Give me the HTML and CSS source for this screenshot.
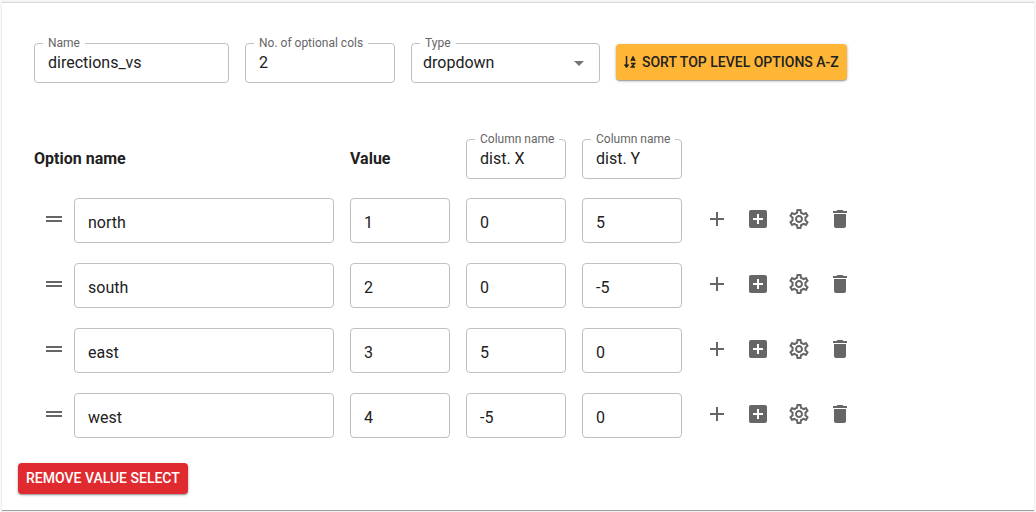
FILE: index.html
```
<!DOCTYPE html>
<html lang="en">
<head>
<meta charset="utf-8">
<title>Value select editor</title>
<link rel="stylesheet" href="styles.css">
</head>
<body>
<svg class="sprite" aria-hidden="true">
  <symbol id="drag" viewBox="0 0 24 24"><path d="M20 9H4v2h16V9zM4 15h16v-2H4v2z"/></symbol>
  <symbol id="add" viewBox="0 0 24 24"><path d="M19 13h-6v6h-2v-6H5v-2h6V5h2v6h6v2z"/></symbol>
  <symbol id="add-box" viewBox="0 0 24 24"><path d="M19 3H5c-1.11 0-2 .9-2 2v14c0 1.1.89 2 2 2h14c1.1 0 2-.9 2-2V5c0-1.1-.9-2-2-2zm-2 10h-4v4h-2v-4H7v-2h4V7h2v4h4v2z"/></symbol>
  <symbol id="gear" viewBox="0 0 24 24"><path d="M19.43 12.98c.04-.32.07-.64.07-.98 0-.34-.03-.66-.07-.98l2.11-1.65c.19-.15.24-.42.12-.64l-2-3.46c-.09-.16-.26-.25-.44-.25-.06 0-.12.01-.17.03l-2.49 1c-.52-.4-1.08-.73-1.69-.98l-.38-2.65C14.46 2.18 14.25 2 14 2h-4c-.25 0-.46.18-.49.42l-.38 2.65c-.61.25-1.17.59-1.69.98l-2.49-1c-.06-.02-.12-.03-.18-.03-.17 0-.34.09-.43.25l-2 3.46c-.13.22-.07.49.12.64l2.11 1.65c-.04.32-.07.65-.07.98 0 .33.03.66.07.98l-2.11 1.65c-.19.15-.24.42-.12.64l2 3.46c.09.16.26.25.44.25.06 0 .12-.01.17-.03l2.49-1c.52.4 1.08.73 1.69.98l.38 2.65c.03.24.24.42.49.42h4c.25 0 .46-.18.49-.42l.38-2.65c.61-.25 1.17-.59 1.69-.98l2.49 1c.06.02.12.03.18.03.17 0 .34-.09.43-.25l2-3.46c.12-.22.07-.49-.12-.64l-2.11-1.65zm-1.98-1.71c.04.31.05.52.05.73 0 .21-.02.43-.05.73l-.14 1.13.89.7 1.08.84-.7 1.21-1.27-.51-1.04-.42-.9.68c-.43.32-.84.56-1.25.73l-1.06.43-.16 1.13-.2 1.35h-1.4l-.19-1.35-.16-1.13-1.06-.43c-.43-.18-.83-.41-1.23-.71l-.91-.7-1.06.43-1.27.51-.7-1.21 1.08-.84.89-.7-.14-1.13c-.03-.31-.05-.54-.05-.74s.02-.43.05-.73l.14-1.13-.89-.7-1.08-.84.7-1.21 1.27.51 1.04.42.9-.68c.43-.32.84-.56 1.25-.73l1.06-.43.16-1.13.2-1.35h1.39l.19 1.35.16 1.13 1.06.43c.43.18.83.41 1.23.71l.91.7 1.06-.43 1.27-.51.7 1.21-1.07.85-.89.7.14 1.13zM12 8c-2.21 0-4 1.79-4 4s1.79 4 4 4 4-1.79 4-4-1.79-4-4-4zm0 6c-1.1 0-2-.9-2-2s.9-2 2-2 2 .9 2 2-.9 2-2 2z"/></symbol>
  <symbol id="trash" viewBox="0 0 24 24"><path d="M6 19c0 1.1.9 2 2 2h8c1.1 0 2-.9 2-2V7H6v12zM19 4h-3.500l-1-1h-5l-1 1H5v2h14V4z"/></symbol>
</svg>

<main class="card">
  <div class="settings">
    <div class="field field-name">
      <input class="input" id="name" type="text" value="directions_vs">
      <label class="label" for="name">Name</label>
    </div>
    <div class="field field-cols">
      <input class="input" id="cols" type="text" value="2">
      <label class="label" for="cols">No. of optional cols</label>
    </div>
    <div class="field field-type">
      <select class="input select" id="type"><option>dropdown</option></select>
      <label class="label" for="type">Type</label>
      <svg class="caret" viewBox="0 0 24 24" aria-hidden="true"><path d="M7 10l5 5 5-5z"/></svg>
    </div>
    <button class="button button-sort" type="button">
      <svg class="sort-icon" viewBox="0 0 12 12" aria-hidden="true">
        <path d="M2.500 0v10.500M0.500 8.500l2 2.500 2-2.500"/>
        <path d="M7 5l2-4 2 4M8 4h2M7 7.500h3.500L7.500 11H11"/>
      </svg>
      Sort top level options A-Z
    </button>
  </div>

  <div class="options">
    <div class="row row-head">
      <div class="heading">Option name</div>
      <div class="heading">Value</div>
      <div class="field">
        <input class="input" id="col-x" type="text" value="dist. X">
        <label class="label" for="col-x">Column name</label>
      </div>
      <div class="field">
        <input class="input" id="col-y" type="text" value="dist. Y">
        <label class="label" for="col-y">Column name</label>
      </div>
    </div>

    <div class="row">
      <div class="option">
        <button class="icon-button" type="button" aria-label="Move north"><svg class="icon"><use href="#drag"/></svg></button>
        <input class="input cell" type="text" aria-label="Option name" value="north">
      </div>
      <input class="input cell" type="text" aria-label="Value" value="1">
      <input class="input cell" type="text" aria-label="dist. X" value="0">
      <input class="input cell" type="text" aria-label="dist. Y" value="5">
      <div class="actions">
        <button class="icon-button" type="button" aria-label="Add option"><svg class="icon"><use href="#add"/></svg></button>
        <button class="icon-button" type="button" aria-label="Add child option"><svg class="icon"><use href="#add-box"/></svg></button>
        <button class="icon-button" type="button" aria-label="Settings"><svg class="icon"><use href="#gear"/></svg></button>
        <button class="icon-button" type="button" aria-label="Delete"><svg class="icon"><use href="#trash"/></svg></button>
      </div>
    </div>

    <div class="row">
      <div class="option">
        <button class="icon-button" type="button" aria-label="Move south"><svg class="icon"><use href="#drag"/></svg></button>
        <input class="input cell" type="text" aria-label="Option name" value="south">
      </div>
      <input class="input cell" type="text" aria-label="Value" value="2">
      <input class="input cell" type="text" aria-label="dist. X" value="0">
      <input class="input cell" type="text" aria-label="dist. Y" value="-5">
      <div class="actions">
        <button class="icon-button" type="button" aria-label="Add option"><svg class="icon"><use href="#add"/></svg></button>
        <button class="icon-button" type="button" aria-label="Add child option"><svg class="icon"><use href="#add-box"/></svg></button>
        <button class="icon-button" type="button" aria-label="Settings"><svg class="icon"><use href="#gear"/></svg></button>
        <button class="icon-button" type="button" aria-label="Delete"><svg class="icon"><use href="#trash"/></svg></button>
      </div>
    </div>

    <div class="row">
      <div class="option">
        <button class="icon-button" type="button" aria-label="Move east"><svg class="icon"><use href="#drag"/></svg></button>
        <input class="input cell" type="text" aria-label="Option name" value="east">
      </div>
      <input class="input cell" type="text" aria-label="Value" value="3">
      <input class="input cell" type="text" aria-label="dist. X" value="5">
      <input class="input cell" type="text" aria-label="dist. Y" value="0">
      <div class="actions">
        <button class="icon-button" type="button" aria-label="Add option"><svg class="icon"><use href="#add"/></svg></button>
        <button class="icon-button" type="button" aria-label="Add child option"><svg class="icon"><use href="#add-box"/></svg></button>
        <button class="icon-button" type="button" aria-label="Settings"><svg class="icon"><use href="#gear"/></svg></button>
        <button class="icon-button" type="button" aria-label="Delete"><svg class="icon"><use href="#trash"/></svg></button>
      </div>
    </div>

    <div class="row">
      <div class="option">
        <button class="icon-button" type="button" aria-label="Move west"><svg class="icon"><use href="#drag"/></svg></button>
        <input class="input cell" type="text" aria-label="Option name" value="west">
      </div>
      <input class="input cell" type="text" aria-label="Value" value="4">
      <input class="input cell" type="text" aria-label="dist. X" value="-5">
      <input class="input cell" type="text" aria-label="dist. Y" value="0">
      <div class="actions">
        <button class="icon-button" type="button" aria-label="Add option"><svg class="icon"><use href="#add"/></svg></button>
        <button class="icon-button" type="button" aria-label="Add child option"><svg class="icon"><use href="#add-box"/></svg></button>
        <button class="icon-button" type="button" aria-label="Settings"><svg class="icon"><use href="#gear"/></svg></button>
        <button class="icon-button" type="button" aria-label="Delete"><svg class="icon"><use href="#trash"/></svg></button>
      </div>
    </div>
  </div>

  <button class="button button-remove" type="button">Remove value select</button>
</main>
</body>
</html>
```
FILE: styles.css
```
* {
  box-sizing: border-box;
}

body {
  margin: 0;
  padding: 2px 2px 1px;
  background: #f8f8f8;
  color: #212121;
  font: 16px/24px Roboto, sans-serif;
}

.sprite {
  display: none;
}

.card {
  padding: 40px 16px 16px;
  background: #fff;
  border-top: 1px solid #dadada;
  border-bottom: 1px solid #a0a0a0;
  box-shadow: 0 0 1px rgba(0, 0, 0, 0.2);
}

.settings {
  display: flex;
  gap: 16px;
  padding: 0 16px;
}

.field {
  position: relative;
}

.field-name {
  width: 195px;
}

.field-cols {
  width: 150px;
}

.field-type {
  width: 189px;
}

.input {
  display: block;
  width: 100%;
  height: 40px;
  margin: 0;
  padding: 0 13px 2px;
  border: 1px solid #c0c0c0;
  border-radius: 4px;
  background: #fff;
  color: inherit;
  font: inherit;
}

.select {
  appearance: none;
  padding: 0 32px 0 11px;
}

.label {
  position: absolute;
  top: -8px;
  left: 9px;
  padding: 0 5px;
  background: #fff;
  color: #666;
  font-size: 12px;
  line-height: 16px;
  white-space: nowrap;
}

.caret {
  position: absolute;
  top: 8px;
  right: 9px;
  width: 24px;
  height: 24px;
  fill: #757575;
  pointer-events: none;
}

.button {
  display: flex;
  align-items: center;
  border: 0;
  border-radius: 4px;
  font: 500 14px/20px Roboto, sans-serif;
  text-transform: uppercase;
  white-space: nowrap;
  box-shadow: 0 1px 3px rgba(0, 0, 0, 0.3), 0 1px 1px rgba(0, 0, 0, 0.2);
}

.button-sort {
  gap: 6px;
  height: 36px;
  margin-top: 1px;
  padding: 0 8px;
  background: #ffb636;
  color: #212121;
}

.sort-icon {
  width: 12px;
  height: 12px;
  fill: none;
  stroke: #212121;
  stroke-width: 1.5;
}

.options {
  display: grid;
  gap: 20px;
  padding: 56px 16px 0;
}

.row {
  display: grid;
  grid-template-columns: 300px repeat(3, 100px) auto;
  justify-content: start;
  column-gap: 16px;
}

.row-head {
  height: 39px;
}

.heading {
  font-weight: 700;
  line-height: 39px;
}

.option,
.actions {
  display: flex;
}

.actions {
  gap: 1px;
  margin-left: -1px;
}

.cell {
  height: 45px;
  padding: 4px 13px 0;
}

.icon-button {
  display: grid;
  flex: 0 0 40px;
  place-items: center;
  height: 42px;
  padding: 0;
  border: 0;
  background: none;
}

.icon {
  width: 24px;
  height: 24px;
  fill: #666;
}

.button-remove {
  height: 31px;
  margin-top: 25px;
  padding: 0 8px 2px;
  background: #df2b30;
  color: #fff;
}
```
